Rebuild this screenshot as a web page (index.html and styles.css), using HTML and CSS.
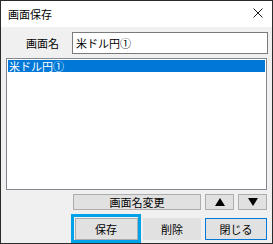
FILE: index.html
```html
<!DOCTYPE html>
<html lang="ja">
<head>
    <meta charset="UTF-8">
    <title>画面保存</title>
    <link rel="stylesheet" href="styles.css">
</head>
<body>
    <div class="window">
        <div class="titlebar">
            <span class="title">画面保存</span>
            <svg class="close" width="10" height="10" viewBox="0 0 10 10">
                <path d="M0.5 0.5 L9.5 9.5 M9.5 0.5 L0.5 9.5" stroke="#1a1a1a" stroke-width="1" fill="none"/>
            </svg>
        </div>
        <div class="content">
            <div class="name-row">
                <label class="name-label">画面名</label>
                <div class="name-input">米ドル円①</div>
            </div>
            <div class="list">
                <div class="item selected">米ドル円①</div>
            </div>
            <div class="btn-row">
                <button class="btn rename">画面名変更</button>
                <button class="btn arrow">
                    <svg width="10" height="8" viewBox="0 0 10 8"><path d="M5 0 L10 8 L0 8 Z" fill="#000"/></svg>
                </button>
                <button class="btn arrow">
                    <svg width="10" height="8" viewBox="0 0 10 8"><path d="M0 0 L10 0 L5 8 Z" fill="#000"/></svg>
                </button>
            </div>
            <div class="btn-row bottom">
                <div class="focus-ring"><button class="btn save">保存</button></div>
                <button class="btn delete">削除</button>
                <button class="btn close-btn">閉じる</button>
            </div>
        </div>
    </div>
</body>
</html>
```

FILE: styles.css
```css
/* Dialog window */
body {
    margin: 0;
    padding: 0;
    font-family: "Noto Sans CJK JP", "Noto Sans", sans-serif;
    font-size: 11px;
    color: #000;
}

.window {
    width: 273px;
    height: 244px;
    box-sizing: border-box;
    border: 1px solid #2b2b2b;
    background: #f0f0f0;
    display: flex;
    flex-direction: column;
    overflow: hidden;
}

/* Title bar */
.titlebar {
    height: 26px;
    flex-shrink: 0;
    background: #fff;
    display: flex;
    align-items: center;
    justify-content: space-between;
    padding: 0 9px 0 7px;
}

.title {
    font-size: 11px;
    line-height: 14px;
}

.close {
    display: block;
    margin-top: -2px;
}

/* Body */
.content {
    padding: 5px 4px 0 5px;
}

.name-row {
    display: flex;
    align-items: center;
    height: 22px;
}

.name-label {
    width: 66px;
    text-align: right;
    padding-right: 13px;
    box-sizing: border-box;
}

.name-input {
    flex: 1;
    height: 22px;
    box-sizing: border-box;
    border: 1px solid #7a7a7a;
    background: #fff;
    padding: 0 3px;
    line-height: 20px;
}

.list {
    margin-top: 4px;
    height: 132px;
    box-sizing: border-box;
    border: 1px solid #828790;
    background: #fff;
    padding: 1px;
    margin-right: 1px;
}

.item {
    height: 12px;
    line-height: 12px;
    padding-left: 1px;
}

.item.selected {
    background: #0078d7;
    color: #fff;
}

/* Buttons */
.btn-row {
    display: flex;
    justify-content: flex-end;
    gap: 4px;
    margin-top: 4px;
    margin-right: 1px;
}

.btn {
    font-family: inherit;
    font-size: 11px;
    height: 16px;
    padding: 0;
    box-sizing: border-box;
    background: #e1e1e1;
    border: 1px solid #adadad;
    color: #000;
    line-height: 14px;
}

.rename {
    width: 128px;
}

.arrow {
    width: 29px;
    display: flex;
    align-items: center;
    justify-content: center;
}

.arrow svg {
    display: block;
}

.bottom {
    margin-top: 4px;
    align-items: center;
}

.focus-ring {
    border: 3px solid #00a2e8;
    width: 70px;
    height: 29px;
    box-sizing: border-box;
    display: flex;
    align-items: center;
    justify-content: center;
    margin-right: -2px;
}

.save {
    width: 63px;
    height: 22px;
}

.delete {
    width: 58px;
    height: 22px;
    border-color: #e1e1e1;
}

.close-btn {
    width: 62px;
    height: 22px;
    border-color: #0078d7;
}
```
